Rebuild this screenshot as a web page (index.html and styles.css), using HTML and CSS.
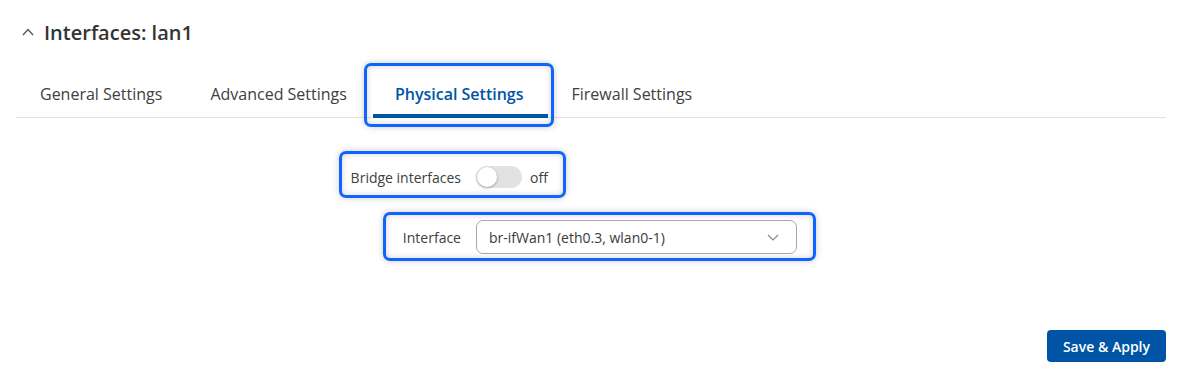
FILE: index.html
```html
<!DOCTYPE html>
<html lang="en">
<head>
    <meta charset="UTF-8">
    <title>Interfaces: lan1</title>
    <link rel="stylesheet" href="styles.css">
</head>
<body>
    <div class="page">
        <div class="section-head">
            <svg class="caret" width="12" height="8" viewBox="0 0 12 8">
                <path d="M1 7 L6 1.5 L11 7" fill="none" stroke="#555" stroke-width="1.3"/>
            </svg>
            <h2>Interfaces: lan1</h2>
        </div>

        <ul class="tabs">
            <li class="tab">General Settings</li>
            <li class="tab">Advanced Settings</li>
            <li class="tab active">Physical Settings<span class="hl hl-tab"></span></li>
            <li class="tab">Firewall Settings</li>
        </ul>

        <div class="form">
            <div class="row row-bridge">
                <div class="label-col">
                    <span class="label">Bridge interfaces<span class="hl"></span></span>
                </div>
                <div class="control">
                    <span class="toggle"><span class="knob"></span></span>
                    <span class="toggle-text">off</span>
                </div>
            </div>
            <div class="row row-iface">
                <div class="label-col">
                    <span class="label">Interface<span class="hl"></span></span>
                </div>
                <div class="control">
                    <div class="select">
                        <span>br-ifWan1 (eth0.3, wlan0-1)</span>
                        <svg width="12" height="7" viewBox="0 0 12 7">
                            <path d="M1 1 L6 6 L11 1" fill="none" stroke="#8a8a8a" stroke-width="1.2"/>
                        </svg>
                    </div>
                </div>
            </div>
        </div>

        <div class="actions">
            <button class="btn-save">Save &amp; Apply</button>
        </div>
    </div>
</body>
</html>
```

FILE: styles.css
```css
body {
    margin: 0;
    background: #ffffff;
    font-family: 'Open Sans', 'Liberation Sans', sans-serif;
    color: #3a3a3a;
}

.page {
    padding: 20px 19px 0 16px;
}

.section-head {
    display: flex;
    align-items: center;
    height: 26px;
}

.caret {
    margin-left: 6px;
    margin-right: 10px;
    margin-top: -2px;
}

.section-head h2 {
    margin: 0;
    font-size: 20px;
    font-weight: 600;
    line-height: 26px;
    color: #333;
}

.tabs {
    list-style: none;
    margin: 24px 0 0;
    padding: 0;
    display: flex;
    border-bottom: 1px solid #e3e3e3;
}

.tab {
    position: relative;
    padding: 14px 24px 12px;
    font-size: 16px;
    line-height: 21px;
    color: #404040;
}

.tab.active {
    color: #0054a6;
    font-weight: 600;
}

.tab.active::after {
    content: "";
    position: absolute;
    left: 2px;
    right: 0;
    bottom: -1px;
    height: 4px;
    background: #0054a6;
}

/* blue highlight frames drawn over the page */
.hl {
    position: absolute;
    border: 3px solid #0f63ff;
    border-radius: 7px;
    box-shadow: 0 0 6px rgba(0, 0, 0, 0.22), inset 0 0 6px rgba(0, 0, 0, 0.18);
    pointer-events: none;
}

.hl-tab {
    top: -7px;
    bottom: -10px;
    left: -7px;
    right: -6px;
}

.form {
    margin-top: 42px;
}

.row {
    display: flex;
    align-items: center;
    height: 34px;
}

.row + .row {
    margin-top: 26px;
}

.label-col {
    width: 445px;
    display: flex;
    justify-content: flex-end;
    font-size: 14px;
    color: #404040;
}

.label {
    position: relative;
}

.row-bridge .label .hl {
    top: -17px;
    bottom: -11px;
    left: -12px;
    right: -105px;
}

.row-iface .label .hl {
    top: -16px;
    bottom: -14px;
    left: -20px;
    right: -355px;
}

.control {
    margin-left: 15px;
    display: flex;
    align-items: center;
}

.toggle {
    display: flex;
    align-items: center;
    width: 46px;
    height: 22px;
    padding: 0 1px;
    box-sizing: border-box;
    border-radius: 11px;
    background: #e2e2e2;
}

.knob {
    width: 20px;
    height: 20px;
    border-radius: 50%;
    background: #fff;
    box-shadow: 0 1px 3px rgba(0, 0, 0, 0.3);
}

.toggle-text {
    margin-left: 8px;
    font-size: 14px;
    color: #404040;
}

.select {
    width: 321px;
    height: 34px;
    box-sizing: border-box;
    border: 1px solid #a8a8a8;
    border-radius: 7px;
    padding: 0 17px 0 12px;
    display: flex;
    align-items: center;
    justify-content: space-between;
    font-size: 14px;
    color: #3a3a3a;
}

.actions {
    display: flex;
    justify-content: flex-end;
    margin-top: 76px;
}

.btn-save {
    height: 32px;
    padding: 0 16px;
    border: none;
    border-radius: 4px;
    background: #0054a6;
    color: #fff;
    font-family: inherit;
    font-size: 14px;
    font-weight: 600;
}
```
